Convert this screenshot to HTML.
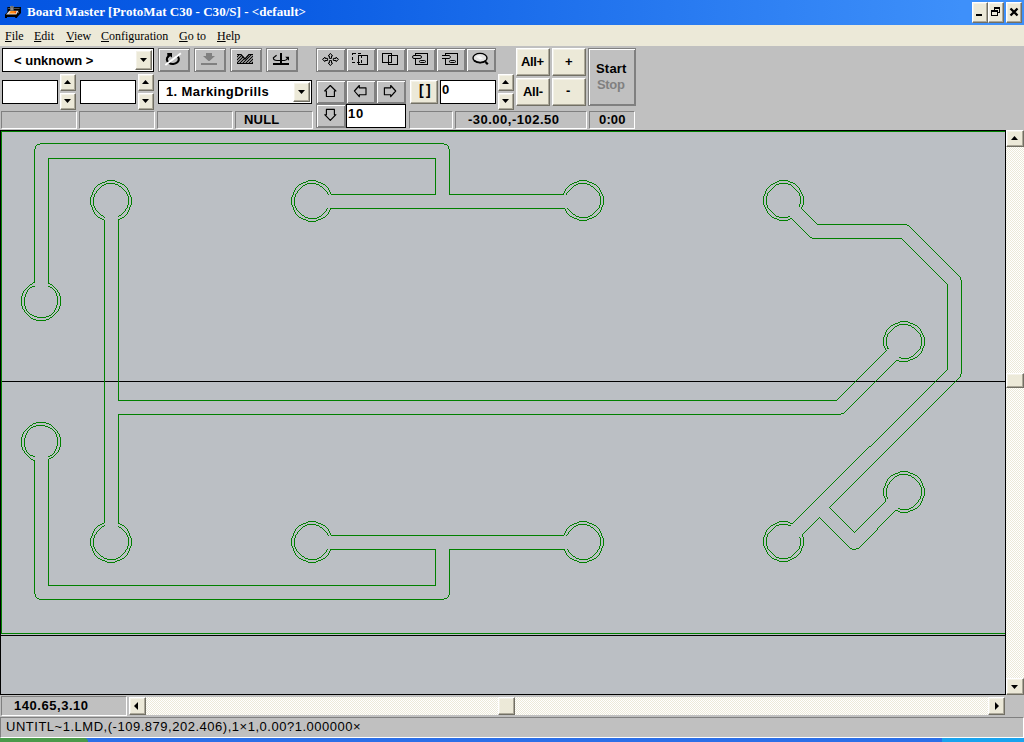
<!DOCTYPE html>
<html><head><meta charset="utf-8"><title>Board Master</title>
<style>
*{box-sizing:border-box;margin:0;padding:0}
html,body{width:1024px;height:742px;overflow:hidden;background:#c0c0c0;font-family:"Liberation Sans",sans-serif;font-size:13px;color:#000}
.a{position:absolute}
#title{left:0;top:0;width:1024px;height:25px;background:linear-gradient(90deg,#0455e2 0%,#0b5de4 30%,#3e90fa 94%,#3e90fa 100%)}
#tt{left:27px;top:4px;font-family:"Liberation Serif",serif;font-weight:bold;font-size:13px;color:#fff;white-space:nowrap;line-height:15px;letter-spacing:.03px}
#menu{left:0;top:25px;width:1024px;height:21px;background:#ece9d8}
#menu span{position:absolute;top:4px;font-family:"Liberation Serif",serif;font-size:12px;line-height:15px;white-space:nowrap}
#menu u{text-decoration:underline;text-underline-offset:1px}
.sunk{border:1px solid;border-color:#808080 #fff #fff #808080;background:#c0c0c0;height:18px;top:111px}
.t{position:absolute;font-weight:bold;font-size:13px;line-height:15px;white-space:nowrap}
.tb{border:1px solid #808080;background:#c0c0c0;box-shadow:inset 1px 1px 0 #fff,inset -1px -1px 0 #808080}
.xb{background:#ece9d8;border:1px solid;border-color:#fff #716f64 #716f64 #fff;box-shadow:inset -1px -1px 0 #aca899,inset 1px 1px 0 #f4f2e8}
.ed{background:#fff;border:1px solid #000}
.track{background:repeating-conic-gradient(#fff 0% 25%,#ece9d8 0% 50%) 0 0/2px 2px}
</style></head><body>

<!-- title bar -->
<div id="title" class="a"></div>
<div id="tt" class="a">Board Master [ProtoMat C30 - C30/S] - &lt;default&gt;</div>
<div class="a xb" style="left:972px;top:2px;width:16px;height:21px"></div>
<div class="a xb" style="left:988px;top:2px;width:16px;height:21px"></div>
<div class="a xb" style="left:1006px;top:2px;width:16px;height:21px"></div>

<!-- menu -->
<div id="menu" class="a">
 <span style="left:5px"><u>F</u>ile</span>
 <span style="left:34px"><u>E</u>dit</span>
 <span style="left:66px"><u>V</u>iew</span>
 <span style="left:101px"><u>C</u>onfiguration</span>
 <span style="left:179px"><u>G</u>o to</span>
 <span style="left:217px"><u>H</u>elp</span>
</div>

<!-- toolbar row 1 -->
<div class="a ed" style="left:2px;top:48px;width:152px;height:24px"></div>
<div class="a t" style="left:14px;top:53px">&lt; unknown &gt;</div>
<div class="a xb" style="left:135px;top:50px;width:17px;height:20px"></div>
<div class="a tb" style="left:158px;top:48px;width:32px;height:24px"></div>
<div class="a tb" style="left:194px;top:48px;width:32px;height:24px"></div>
<div class="a tb" style="left:230px;top:48px;width:32px;height:24px"></div>
<div class="a tb" style="left:266px;top:48px;width:32px;height:24px"></div>
<div class="a tb" style="left:316px;top:48px;width:30px;height:24px"></div>
<div class="a tb" style="left:346px;top:48px;width:30px;height:24px"></div>
<div class="a tb" style="left:376px;top:48px;width:30px;height:24px"></div>
<div class="a tb" style="left:406px;top:48px;width:30px;height:24px"></div>
<div class="a tb" style="left:436px;top:48px;width:30px;height:24px"></div>
<div class="a tb" style="left:466px;top:48px;width:30px;height:24px"></div>

<!-- row 2 -->
<div class="a ed" style="left:2px;top:80px;width:56px;height:24px"></div>
<div class="a xb" style="left:60px;top:74px;width:16px;height:17px"></div>
<div class="a xb" style="left:60px;top:93px;width:16px;height:17px"></div>
<div class="a ed" style="left:80px;top:80px;width:56px;height:24px"></div>
<div class="a xb" style="left:138px;top:74px;width:16px;height:17px"></div>
<div class="a xb" style="left:138px;top:93px;width:16px;height:17px"></div>
<div class="a ed" style="left:158px;top:80px;width:154px;height:24px"></div>
<div class="a t" style="left:166px;top:84px;letter-spacing:.39px">1. MarkingDrills</div>
<div class="a xb" style="left:293px;top:82px;width:17px;height:20px"></div>

<div class="a tb" style="left:316px;top:80px;width:30px;height:24px"></div>
<div class="a tb" style="left:346px;top:80px;width:30px;height:24px"></div>
<div class="a tb" style="left:376px;top:80px;width:30px;height:24px"></div>
<div class="a tb" style="left:316px;top:104px;width:30px;height:24px"></div>
<div class="a ed" style="left:346px;top:104px;width:60px;height:24px"></div>
<div class="a t" style="left:348px;top:106px;letter-spacing:.8px">10</div>

<div class="a xb" style="left:410px;top:80px;width:28px;height:24px"></div>
<div class="a t" style="left:419px;top:83px;letter-spacing:2.4px;font-size:14px">[]</div>
<div class="a ed" style="left:440px;top:80px;width:56px;height:24px"></div>
<div class="a t" style="left:442px;top:82px">0</div>
<div class="a xb" style="left:498px;top:74px;width:16px;height:17px"></div>
<div class="a xb" style="left:498px;top:93px;width:16px;height:17px"></div>

<div class="a xb" style="left:516px;top:48px;width:34px;height:28px"></div>
<div class="a t" style="left:521px;top:54px;letter-spacing:-.4px">All+</div>
<div class="a xb" style="left:552px;top:48px;width:34px;height:28px"></div>
<div class="a t" style="left:565px;top:54px">+</div>
<div class="a xb" style="left:516px;top:78px;width:34px;height:28px"></div>
<div class="a t" style="left:523px;top:84px;letter-spacing:-.3px">All-</div>
<div class="a xb" style="left:552px;top:78px;width:34px;height:28px"></div>
<div class="a t" style="left:566px;top:83px">-</div>

<div class="a tb" style="left:588px;top:48px;width:48px;height:58px"></div>
<div class="a t" style="left:596px;top:61px;letter-spacing:.2px">Start</div>
<div class="a t" style="left:597px;top:77px;color:#808080;letter-spacing:-.35px">Stop</div>

<!-- status row -->
<div class="a sunk" style="left:1px;width:76px"></div>
<div class="a sunk" style="left:79px;width:76px"></div>
<div class="a sunk" style="left:157px;width:76px"></div>
<div class="a sunk" style="left:235px;width:78px"></div>
<div class="a t" style="left:244px;top:112px;letter-spacing:.2px">NULL</div>
<div class="a sunk" style="left:409px;width:44px"></div>
<div class="a sunk" style="left:455px;width:132px"></div>
<div class="a t" style="left:468px;top:112px;letter-spacing:.49px">-30.00,-102.50</div>
<div class="a sunk" style="left:589px;width:46px"></div>
<div class="a t" style="left:599px;top:112px;letter-spacing:.15px">0:00</div>

<!-- canvas -->
<div class="a" style="left:0;top:130px;width:1006px;height:565px;background:#000"></div>
<div class="a" style="left:1px;top:131px;width:1004px;height:563px;background:#bbbfc4"></div>

<!-- vertical scrollbar -->
<div class="a track" style="left:1006px;top:130px;width:18px;height:565px"></div>
<div class="a xb" style="left:1006px;top:130px;width:18px;height:17px"></div>
<div class="a xb" style="left:1006px;top:678px;width:18px;height:17px"></div>
<div class="a xb" style="left:1006px;top:373px;width:18px;height:15px"></div>

<!-- bottom: coords + hscroll -->
<div class="a" style="left:0;top:695px;width:1024px;height:22px;background:#c0c0c0"></div>
<div class="a sunk" style="left:1px;top:696px;width:126px;height:20px"></div>
<div class="a t" style="left:14px;top:698px;letter-spacing:.54px">140.65,3.10</div>
<div class="a track" style="left:129px;top:697px;width:876px;height:18px"></div>
<div class="a xb" style="left:129px;top:697px;width:17px;height:18px"></div>
<div class="a xb" style="left:988px;top:697px;width:17px;height:18px"></div>
<div class="a xb" style="left:498px;top:697px;width:17px;height:18px"></div>

<!-- status bar -->
<div class="a" style="left:0;top:717px;width:1024px;height:21px;background:#c0c0c0;border:1px solid;border-color:#808080 #fff #fff #808080"></div>
<div class="a t" style="left:6px;top:719px;font-weight:normal;letter-spacing:.52px">UNTITL~1.LMD,(-109.879,202.406),1×1,0.00?1.000000×</div>
<!-- taskbar sliver -->
<div class="a" style="left:0;top:738px;width:1024px;height:4px;background:#2b6fe8"></div>
<div class="a" style="left:0;top:738px;width:88px;height:4px;background:#4a9a4a;border-radius:0 6px 0 0"></div>
<div class="a" style="left:942px;top:738px;width:82px;height:4px;background:#19a3ee"></div>

<!-- vector overlay: canvas drawing + icons, page coordinates -->
<svg class="a" style="left:0;top:0" width="1024" height="742" viewBox="0 0 1024 742">
 <g shape-rendering="crispEdges" fill="none" stroke-width="1">
  <path d="M1 131.5H1005M1.5 131V634M1 633.5H1005" stroke="#008000"/>
  <path d="M1 635.5H1005" stroke="#000"/>
  <path d="M2 381.5H1005" stroke="#000"/>
 </g>
 <path d="M40 143h404v1h-404zM37 144h3v1h-3zM444 144h3v1h-3zM48 158h388v1h-388zM107 180h8v1h-8zM308 180h8v1h-8zM579 180h8v1h-8zM779 180h9v1h-9zM105 181h2v1h-2zM115 181h2v1h-2zM306 181h2v1h-2zM316 181h2v1h-2zM577 181h2v1h-2zM587 181h2v1h-2zM777 181h2v1h-2zM788 181h2v1h-2zM102 182h3v1h-3zM117 182h3v1h-3zM303 182h3v1h-3zM318 182h3v1h-3zM574 182h3v1h-3zM589 182h3v1h-3zM775 182h2v1h-2zM790 182h3v1h-3zM100 183h2v1h-2zM106 183h9v1h-9zM120 183h2v1h-2zM301 183h2v1h-2zM307 183h9v1h-9zM321 183h2v1h-2zM572 183h2v1h-2zM578 183h9v1h-9zM592 183h2v1h-2zM773 183h2v1h-2zM779 183h9v1h-9zM793 183h2v1h-2zM98 184h2v1h-2zM104 184h2v1h-2zM115 184h3v1h-3zM122 184h2v1h-2zM299 184h2v1h-2zM305 184h2v1h-2zM316 184h3v1h-3zM323 184h2v1h-2zM570 184h2v1h-2zM576 184h2v1h-2zM587 184h3v1h-3zM594 184h2v1h-2zM771 184h2v1h-2zM776 184h3v1h-3zM788 184h3v1h-3zM102 185h2v1h-2zM303 185h2v1h-2zM574 185h2v1h-2zM119 186h2v1h-2zM320 186h2v1h-2zM591 186h2v1h-2zM331 194h105v1h-105zM449 194h115v1h-115zM330 208h235v1h-235zM573 214h2v1h-2zM101 215h2v1h-2zM119 215h2v1h-2zM302 215h2v1h-2zM590 215h2v1h-2zM319 216h2v1h-2zM570 216h2v1h-2zM576 216h3v1h-3zM588 216h2v1h-2zM594 216h2v1h-2zM776 216h3v1h-3zM788 216h2v1h-2zM98 217h2v1h-2zM122 217h2v1h-2zM299 217h2v1h-2zM305 217h3v1h-3zM317 217h2v1h-2zM323 217h2v1h-2zM572 217h2v1h-2zM579 217h9v1h-9zM592 217h2v1h-2zM772 217h2v1h-2zM779 217h9v1h-9zM100 218h2v1h-2zM120 218h2v1h-2zM301 218h2v1h-2zM308 218h9v1h-9zM321 218h2v1h-2zM574 218h3v1h-3zM589 218h3v1h-3zM774 218h3v1h-3zM790 218h2v1h-2zM102 219h2v1h-2zM118 219h2v1h-2zM303 219h3v1h-3zM318 219h3v1h-3zM577 219h2v1h-2zM587 219h2v1h-2zM777 219h2v1h-2zM788 219h2v1h-2zM306 220h2v1h-2zM316 220h2v1h-2zM579 220h8v1h-8zM779 220h9v1h-9zM308 221h8v1h-8zM817 224h90v1h-90zM907 225h2v1h-2zM810 237h2v1h-2zM812 238h90v1h-90zM33 282h2v1h-2zM48 283h2v1h-2zM30 284h2v1h-2zM50 284h2v1h-2zM32 286h3v1h-3zM48 286h2v1h-2zM30 287h2v1h-2zM50 287h2v1h-2zM30 314h2v1h-2zM32 315h2v1h-2zM49 315h2v1h-2zM34 316h3v1h-3zM46 316h3v1h-3zM37 317h9v1h-9zM50 317h2v1h-2zM31 318h2v1h-2zM33 319h3v1h-3zM46 319h3v1h-3zM36 320h10v1h-10zM900 321h8v1h-8zM898 322h2v1h-2zM908 322h2v1h-2zM895 323h3v1h-3zM910 323h3v1h-3zM893 324h2v1h-2zM899 324h9v1h-9zM913 324h2v1h-2zM891 325h2v1h-2zM897 325h2v1h-2zM908 325h3v1h-3zM915 325h2v1h-2zM895 326h2v1h-2zM912 327h2v1h-2zM887 348h2v1h-2zM911 356h2v1h-2zM899 357h2v1h-2zM909 357h2v1h-2zM915 357h2v1h-2zM901 358h8v1h-8zM913 358h2v1h-2zM910 359h3v1h-3zM896 360h3v1h-3zM908 360h2v1h-2zM899 361h9v1h-9zM118 400h719v1h-719zM841 413h3v1h-3zM118 414h723v1h-723zM36 422h10v1h-10zM33 423h3v1h-3zM46 423h3v1h-3zM49 424h2v1h-2zM30 425h2v1h-2zM36 425h9v1h-9zM33 426h3v1h-3zM45 426h3v1h-3zM31 427h2v1h-2zM48 427h2v1h-2zM50 428h2v1h-2zM869 446h2v1h-2zM30 455h3v1h-3zM50 455h2v1h-2zM33 456h2v1h-2zM48 456h2v1h-2zM51 457h2v1h-2zM49 458h2v1h-2zM31 459h2v1h-2zM33 460h2v1h-2zM900 471h8v1h-8zM898 472h2v1h-2zM908 472h2v1h-2zM895 473h3v1h-3zM910 473h3v1h-3zM893 474h2v1h-2zM899 474h9v1h-9zM913 474h2v1h-2zM891 475h2v1h-2zM897 475h2v1h-2zM908 475h3v1h-3zM915 475h2v1h-2zM895 476h2v1h-2zM912 477h2v1h-2zM911 507h2v1h-2zM898 508h2v1h-2zM909 508h2v1h-2zM915 508h2v1h-2zM900 509h9v1h-9zM913 509h2v1h-2zM895 510h3v1h-3zM910 510h3v1h-3zM898 511h2v1h-2zM908 511h2v1h-2zM900 512h8v1h-8zM308 521h8v1h-8zM579 521h8v1h-8zM779 521h9v1h-9zM306 522h2v1h-2zM316 522h2v1h-2zM577 522h2v1h-2zM587 522h2v1h-2zM777 522h2v1h-2zM788 522h2v1h-2zM102 523h2v1h-2zM118 523h2v1h-2zM303 523h3v1h-3zM318 523h3v1h-3zM574 523h3v1h-3zM589 523h3v1h-3zM775 523h2v1h-2zM790 523h3v1h-3zM100 524h2v1h-2zM120 524h2v1h-2zM301 524h2v1h-2zM307 524h9v1h-9zM321 524h2v1h-2zM572 524h2v1h-2zM578 524h9v1h-9zM592 524h2v1h-2zM773 524h2v1h-2zM779 524h9v1h-9zM98 525h2v1h-2zM122 525h2v1h-2zM299 525h2v1h-2zM305 525h2v1h-2zM316 525h3v1h-3zM323 525h2v1h-2zM570 525h2v1h-2zM576 525h2v1h-2zM587 525h3v1h-3zM594 525h2v1h-2zM771 525h2v1h-2zM776 525h3v1h-3zM788 525h3v1h-3zM102 526h2v1h-2zM303 526h2v1h-2zM574 526h2v1h-2zM119 527h2v1h-2zM320 527h2v1h-2zM591 527h2v1h-2zM331 535h233v1h-233zM850 548h2v1h-2zM856 548h3v1h-3zM330 549h106v1h-106zM449 549h116v1h-116zM852 549h4v1h-4zM101 556h2v1h-2zM302 556h2v1h-2zM573 556h2v1h-2zM118 557h2v1h-2zM319 557h2v1h-2zM590 557h2v1h-2zM776 557h3v1h-3zM788 557h3v1h-3zM794 557h2v1h-2zM98 558h2v1h-2zM104 558h3v1h-3zM116 558h2v1h-2zM122 558h2v1h-2zM299 558h2v1h-2zM305 558h3v1h-3zM317 558h2v1h-2zM323 558h2v1h-2zM570 558h2v1h-2zM576 558h3v1h-3zM588 558h2v1h-2zM594 558h2v1h-2zM772 558h2v1h-2zM779 558h9v1h-9zM792 558h2v1h-2zM100 559h2v1h-2zM107 559h9v1h-9zM120 559h2v1h-2zM301 559h2v1h-2zM308 559h9v1h-9zM321 559h2v1h-2zM572 559h2v1h-2zM579 559h9v1h-9zM592 559h2v1h-2zM774 559h3v1h-3zM790 559h2v1h-2zM102 560h3v1h-3zM117 560h3v1h-3zM303 560h3v1h-3zM318 560h3v1h-3zM574 560h3v1h-3zM589 560h3v1h-3zM777 560h2v1h-2zM788 560h2v1h-2zM105 561h2v1h-2zM115 561h2v1h-2zM306 561h2v1h-2zM316 561h2v1h-2zM577 561h2v1h-2zM587 561h2v1h-2zM779 561h9v1h-9zM107 562h8v1h-8zM308 562h8v1h-8zM579 562h8v1h-8zM48 585h388v1h-388zM37 598h2v1h-2zM444 598h3v1h-3zM39 599h405v1h-405zM21 296h1v10h-1zM21 437h1v10h-1zM22 293h1v3h-1zM22 306h1v3h-1zM22 434h1v3h-1zM22 447h1v3h-1zM23 291h1v2h-1zM23 309h1v1h-1zM23 432h1v2h-1zM23 450h1v1h-1zM24 290h1v1h-1zM24 297h1v9h-1zM24 310h1v2h-1zM24 431h1v1h-1zM24 438h1v9h-1zM24 451h1v2h-1zM25 289h1v1h-1zM25 294h1v3h-1zM25 306h1v3h-1zM25 312h1v1h-1zM25 430h1v1h-1zM25 435h1v3h-1zM25 447h1v3h-1zM25 453h1v1h-1zM26 288h1v1h-1zM26 292h1v2h-1zM26 309h1v2h-1zM26 313h1v1h-1zM26 429h1v1h-1zM26 433h1v2h-1zM26 450h1v2h-1zM26 454h1v1h-1zM27 287h1v1h-1zM27 290h1v2h-1zM27 311h1v1h-1zM27 314h1v1h-1zM27 428h1v1h-1zM27 431h1v2h-1zM27 452h1v1h-1zM27 455h1v1h-1zM28 286h1v1h-1zM28 289h1v1h-1zM28 312h1v1h-1zM28 315h1v1h-1zM28 427h1v1h-1zM28 430h1v1h-1zM28 453h1v1h-1zM28 456h1v1h-1zM29 285h1v1h-1zM29 288h1v1h-1zM29 313h1v1h-1zM29 316h1v1h-1zM29 426h1v1h-1zM29 429h1v1h-1zM29 454h1v1h-1zM29 457h1v1h-1zM30 317h1v1h-1zM30 428h1v1h-1zM30 458h1v1h-1zM32 283h1v1h-1zM32 424h1v1h-1zM34 149h1v133h-1zM34 461h1v133h-1zM35 146h1v3h-1zM35 594h1v3h-1zM36 145h1v1h-1zM36 597h1v1h-1zM48 159h1v124h-1zM48 459h1v126h-1zM49 318h1v1h-1zM51 314h1v1h-1zM51 425h1v1h-1zM52 285h1v1h-1zM52 288h1v1h-1zM52 313h1v1h-1zM52 316h1v1h-1zM52 426h1v1h-1zM52 429h1v1h-1zM52 454h1v1h-1zM53 286h1v1h-1zM53 289h1v1h-1zM53 312h1v1h-1zM53 315h1v1h-1zM53 427h1v1h-1zM53 430h1v1h-1zM53 453h1v1h-1zM53 456h1v1h-1zM54 287h1v1h-1zM54 290h1v1h-1zM54 310h1v2h-1zM54 314h1v1h-1zM54 428h1v1h-1zM54 431h1v1h-1zM54 451h1v2h-1zM54 455h1v1h-1zM55 288h1v1h-1zM55 291h1v2h-1zM55 308h1v2h-1zM55 313h1v1h-1zM55 429h1v1h-1zM55 432h1v2h-1zM55 449h1v2h-1zM55 454h1v1h-1zM56 289h1v1h-1zM56 293h1v3h-1zM56 305h1v3h-1zM56 312h1v1h-1zM56 430h1v1h-1zM56 434h1v3h-1zM56 446h1v3h-1zM56 453h1v1h-1zM57 290h1v2h-1zM57 296h1v9h-1zM57 311h1v1h-1zM57 431h1v2h-1zM57 437h1v9h-1zM57 452h1v1h-1zM58 292h1v1h-1zM58 309h1v2h-1zM58 433h1v1h-1zM58 450h1v2h-1zM59 293h1v3h-1zM59 306h1v3h-1zM59 434h1v3h-1zM59 447h1v3h-1zM60 296h1v10h-1zM60 437h1v10h-1zM90 197h1v8h-1zM90 538h1v8h-1zM91 195h1v2h-1zM91 205h1v2h-1zM91 536h1v2h-1zM91 546h1v2h-1zM92 192h1v3h-1zM92 207h1v3h-1zM92 533h1v3h-1zM92 548h1v3h-1zM93 190h1v2h-1zM93 197h1v9h-1zM93 210h1v2h-1zM93 531h1v2h-1zM93 538h1v9h-1zM93 551h1v2h-1zM94 188h1v2h-1zM94 194h1v3h-1zM94 206h1v2h-1zM94 212h1v2h-1zM94 529h1v2h-1zM94 535h1v3h-1zM94 547h1v2h-1zM94 553h1v2h-1zM95 187h1v1h-1zM95 193h1v1h-1zM95 208h1v2h-1zM95 214h1v1h-1zM95 528h1v1h-1zM95 534h1v1h-1zM95 549h1v2h-1zM95 555h1v1h-1zM96 186h1v1h-1zM96 191h1v2h-1zM96 210h1v1h-1zM96 215h1v1h-1zM96 527h1v1h-1zM96 532h1v2h-1zM96 551h1v1h-1zM96 556h1v1h-1zM97 185h1v1h-1zM97 190h1v1h-1zM97 211h1v1h-1zM97 216h1v1h-1zM97 526h1v1h-1zM97 531h1v1h-1zM97 552h1v1h-1zM97 557h1v1h-1zM98 189h1v1h-1zM98 212h1v1h-1zM98 530h1v1h-1zM98 553h1v1h-1zM99 188h1v1h-1zM99 213h1v1h-1zM99 529h1v1h-1zM99 554h1v1h-1zM100 187h1v1h-1zM100 214h1v1h-1zM100 528h1v1h-1zM100 555h1v1h-1zM101 186h1v1h-1zM101 527h1v1h-1zM103 216h1v1h-1zM103 557h1v1h-1zM104 217h1v1h-1zM104 220h1v303h-1zM104 525h1v1h-1zM118 185h1v1h-1zM118 216h1v1h-1zM118 220h1v180h-1zM118 415h1v108h-1zM118 526h1v1h-1zM120 556h1v1h-1zM121 187h1v1h-1zM121 214h1v1h-1zM121 528h1v1h-1zM121 555h1v1h-1zM122 188h1v1h-1zM122 213h1v1h-1zM122 529h1v1h-1zM122 554h1v1h-1zM123 189h1v1h-1zM123 212h1v1h-1zM123 530h1v1h-1zM123 553h1v1h-1zM124 185h1v1h-1zM124 190h1v1h-1zM124 211h1v1h-1zM124 216h1v1h-1zM124 526h1v1h-1zM124 531h1v1h-1zM124 552h1v1h-1zM124 557h1v1h-1zM125 186h1v1h-1zM125 191h1v1h-1zM125 209h1v2h-1zM125 215h1v1h-1zM125 527h1v1h-1zM125 532h1v1h-1zM125 550h1v2h-1zM125 556h1v1h-1zM126 187h1v1h-1zM126 192h1v2h-1zM126 208h1v1h-1zM126 214h1v1h-1zM126 528h1v1h-1zM126 533h1v2h-1zM126 549h1v1h-1zM126 555h1v1h-1zM127 188h1v2h-1zM127 194h1v2h-1zM127 205h1v3h-1zM127 212h1v2h-1zM127 529h1v2h-1zM127 535h1v2h-1zM127 546h1v3h-1zM127 553h1v2h-1zM128 190h1v2h-1zM128 196h1v9h-1zM128 210h1v2h-1zM128 531h1v2h-1zM128 537h1v9h-1zM128 551h1v2h-1zM129 192h1v3h-1zM129 207h1v3h-1zM129 533h1v3h-1zM129 548h1v3h-1zM130 195h1v2h-1zM130 205h1v2h-1zM130 536h1v2h-1zM130 546h1v2h-1zM131 197h1v8h-1zM131 538h1v8h-1zM291 197h1v8h-1zM291 538h1v8h-1zM292 195h1v2h-1zM292 205h1v2h-1zM292 536h1v2h-1zM292 546h1v2h-1zM293 192h1v3h-1zM293 207h1v3h-1zM293 533h1v3h-1zM293 548h1v3h-1zM294 190h1v2h-1zM294 197h1v9h-1zM294 210h1v2h-1zM294 531h1v2h-1zM294 538h1v9h-1zM294 551h1v2h-1zM295 188h1v2h-1zM295 194h1v3h-1zM295 206h1v2h-1zM295 212h1v2h-1zM295 529h1v2h-1zM295 535h1v3h-1zM295 547h1v2h-1zM295 553h1v2h-1zM296 187h1v1h-1zM296 193h1v1h-1zM296 208h1v2h-1zM296 214h1v1h-1zM296 528h1v1h-1zM296 534h1v1h-1zM296 549h1v2h-1zM296 555h1v1h-1zM297 186h1v1h-1zM297 191h1v2h-1zM297 210h1v1h-1zM297 215h1v1h-1zM297 527h1v1h-1zM297 532h1v2h-1zM297 551h1v1h-1zM297 556h1v1h-1zM298 185h1v1h-1zM298 190h1v1h-1zM298 211h1v1h-1zM298 216h1v1h-1zM298 526h1v1h-1zM298 531h1v1h-1zM298 552h1v1h-1zM298 557h1v1h-1zM299 189h1v1h-1zM299 212h1v1h-1zM299 530h1v1h-1zM299 553h1v1h-1zM300 188h1v1h-1zM300 213h1v1h-1zM300 529h1v1h-1zM300 554h1v1h-1zM301 187h1v1h-1zM301 214h1v1h-1zM301 528h1v1h-1zM301 555h1v1h-1zM302 186h1v1h-1zM302 527h1v1h-1zM304 216h1v1h-1zM304 557h1v1h-1zM319 185h1v1h-1zM319 526h1v1h-1zM321 215h1v1h-1zM321 556h1v1h-1zM322 187h1v1h-1zM322 214h1v1h-1zM322 528h1v1h-1zM322 555h1v1h-1zM323 188h1v1h-1zM323 213h1v1h-1zM323 529h1v1h-1zM323 554h1v1h-1zM324 189h1v1h-1zM324 212h1v1h-1zM324 530h1v1h-1zM324 553h1v1h-1zM325 185h1v1h-1zM325 190h1v1h-1zM325 211h1v1h-1zM325 216h1v1h-1zM325 526h1v1h-1zM325 531h1v1h-1zM325 552h1v1h-1zM325 557h1v1h-1zM326 186h1v1h-1zM326 191h1v1h-1zM326 209h1v2h-1zM326 215h1v1h-1zM326 527h1v1h-1zM326 532h1v1h-1zM326 550h1v2h-1zM326 556h1v1h-1zM327 187h1v1h-1zM327 192h1v2h-1zM327 208h1v1h-1zM327 214h1v1h-1zM327 528h1v1h-1zM327 533h1v2h-1zM327 549h1v1h-1zM327 555h1v1h-1zM328 188h1v2h-1zM328 194h1v1h-1zM328 212h1v2h-1zM328 529h1v2h-1zM328 535h1v1h-1zM328 553h1v2h-1zM329 190h1v2h-1zM329 210h1v2h-1zM329 531h1v2h-1zM329 551h1v2h-1zM330 192h1v2h-1zM330 209h1v1h-1zM330 533h1v2h-1zM330 550h1v1h-1zM435 159h1v35h-1zM435 550h1v35h-1zM447 145h1v1h-1zM447 597h1v1h-1zM448 146h1v3h-1zM448 595h1v2h-1zM449 149h1v45h-1zM449 550h1v45h-1zM563 193h1v1h-1zM564 191h1v2h-1zM564 533h1v2h-1zM564 550h1v1h-1zM565 189h1v2h-1zM565 209h1v2h-1zM565 531h1v2h-1zM565 551h1v2h-1zM566 188h1v1h-1zM566 193h1v2h-1zM566 211h1v2h-1zM566 529h1v2h-1zM566 535h1v1h-1zM566 553h1v2h-1zM567 187h1v1h-1zM567 192h1v1h-1zM567 208h1v1h-1zM567 213h1v1h-1zM567 528h1v1h-1zM567 534h1v1h-1zM567 549h1v1h-1zM567 555h1v1h-1zM568 186h1v1h-1zM568 191h1v1h-1zM568 209h1v1h-1zM568 214h1v1h-1zM568 527h1v1h-1zM568 532h1v2h-1zM568 550h1v2h-1zM568 556h1v1h-1zM569 185h1v1h-1zM569 190h1v1h-1zM569 210h1v1h-1zM569 215h1v1h-1zM569 526h1v1h-1zM569 531h1v1h-1zM569 552h1v1h-1zM569 557h1v1h-1zM570 189h1v1h-1zM570 211h1v1h-1zM570 530h1v1h-1zM570 553h1v1h-1zM571 188h1v1h-1zM571 212h1v1h-1zM571 529h1v1h-1zM571 554h1v1h-1zM572 187h1v1h-1zM572 213h1v1h-1zM572 528h1v1h-1zM572 555h1v1h-1zM573 186h1v1h-1zM573 527h1v1h-1zM575 215h1v1h-1zM575 557h1v1h-1zM590 185h1v1h-1zM590 526h1v1h-1zM592 214h1v1h-1zM592 556h1v1h-1zM593 187h1v1h-1zM593 213h1v1h-1zM593 528h1v1h-1zM593 555h1v1h-1zM594 188h1v1h-1zM594 212h1v1h-1zM594 529h1v1h-1zM594 554h1v1h-1zM595 189h1v1h-1zM595 211h1v1h-1zM595 530h1v1h-1zM595 553h1v1h-1zM596 185h1v1h-1zM596 190h1v1h-1zM596 210h1v1h-1zM596 215h1v1h-1zM596 526h1v1h-1zM596 531h1v1h-1zM596 552h1v1h-1zM596 557h1v1h-1zM597 186h1v1h-1zM597 191h1v1h-1zM597 209h1v1h-1zM597 214h1v1h-1zM597 527h1v1h-1zM597 532h1v1h-1zM597 550h1v2h-1zM597 556h1v1h-1zM598 187h1v1h-1zM598 192h1v1h-1zM598 208h1v1h-1zM598 213h1v1h-1zM598 528h1v1h-1zM598 533h1v2h-1zM598 549h1v1h-1zM598 555h1v1h-1zM599 188h1v2h-1zM599 193h1v3h-1zM599 205h1v3h-1zM599 212h1v1h-1zM599 529h1v2h-1zM599 535h1v2h-1zM599 546h1v3h-1zM599 553h1v2h-1zM600 190h1v2h-1zM600 196h1v9h-1zM600 210h1v2h-1zM600 531h1v2h-1zM600 537h1v9h-1zM600 551h1v2h-1zM601 192h1v2h-1zM601 207h1v3h-1zM601 533h1v3h-1zM601 548h1v3h-1zM602 194h1v2h-1zM602 205h1v2h-1zM602 536h1v2h-1zM602 546h1v2h-1zM603 196h1v9h-1zM603 538h1v8h-1zM763 196h1v9h-1zM763 537h1v9h-1zM764 194h1v2h-1zM764 205h1v2h-1zM764 535h1v2h-1zM764 546h1v2h-1zM765 191h1v3h-1zM765 207h1v2h-1zM765 532h1v3h-1zM765 548h1v2h-1zM766 189h1v2h-1zM766 196h1v9h-1zM766 209h1v2h-1zM766 530h1v2h-1zM766 537h1v9h-1zM766 550h1v2h-1zM767 188h1v1h-1zM767 193h1v3h-1zM767 205h1v3h-1zM767 211h1v2h-1zM767 529h1v1h-1zM767 534h1v3h-1zM767 546h1v3h-1zM767 552h1v2h-1zM768 187h1v1h-1zM768 192h1v1h-1zM768 208h1v1h-1zM768 213h1v1h-1zM768 528h1v1h-1zM768 533h1v1h-1zM768 549h1v1h-1zM768 554h1v1h-1zM769 186h1v1h-1zM769 191h1v1h-1zM769 209h1v1h-1zM769 214h1v1h-1zM769 527h1v1h-1zM769 532h1v1h-1zM769 550h1v1h-1zM769 555h1v1h-1zM770 185h1v1h-1zM770 190h1v1h-1zM770 210h1v1h-1zM770 215h1v1h-1zM770 526h1v1h-1zM770 531h1v1h-1zM770 551h1v1h-1zM770 556h1v1h-1zM771 189h1v1h-1zM771 211h1v1h-1zM771 216h1v1h-1zM771 530h1v1h-1zM771 552h1v1h-1zM771 557h1v1h-1zM772 188h1v1h-1zM772 212h1v1h-1zM772 529h1v1h-1zM772 553h1v1h-1zM773 187h1v1h-1zM773 213h1v1h-1zM773 528h1v1h-1zM773 554h1v1h-1zM774 186h1v1h-1zM774 214h1v1h-1zM774 527h1v1h-1zM774 555h1v1h-1zM775 185h1v1h-1zM775 215h1v1h-1zM775 526h1v1h-1zM775 556h1v1h-1zM791 185h1v1h-1zM791 556h1v1h-1zM792 186h1v1h-1zM792 219h1v1h-1zM792 555h1v1h-1zM793 187h1v1h-1zM793 220h1v1h-1zM793 522h1v1h-1zM793 554h1v1h-1zM794 188h1v1h-1zM794 221h1v1h-1zM794 521h1v1h-1zM794 553h1v1h-1zM795 184h1v1h-1zM795 189h1v1h-1zM795 222h1v1h-1zM795 520h1v1h-1zM795 552h1v1h-1zM796 185h1v1h-1zM796 190h1v1h-1zM796 223h1v1h-1zM796 519h1v1h-1zM796 551h1v1h-1zM796 556h1v1h-1zM797 186h1v1h-1zM797 191h1v1h-1zM797 224h1v1h-1zM797 518h1v1h-1zM797 550h1v1h-1zM797 555h1v1h-1zM798 187h1v1h-1zM798 192h1v1h-1zM798 225h1v1h-1zM798 517h1v1h-1zM798 549h1v1h-1zM798 554h1v1h-1zM799 188h1v2h-1zM799 193h1v3h-1zM799 204h1v3h-1zM799 226h1v1h-1zM799 516h1v1h-1zM799 537h1v1h-1zM799 546h1v3h-1zM799 553h1v1h-1zM800 190h1v2h-1zM800 196h1v8h-1zM800 227h1v1h-1zM800 515h1v1h-1zM800 538h1v8h-1zM800 551h1v2h-1zM801 192h1v2h-1zM801 207h1v2h-1zM801 228h1v1h-1zM801 514h1v1h-1zM801 548h1v3h-1zM802 194h1v2h-1zM802 205h1v2h-1zM802 209h1v1h-1zM802 229h1v1h-1zM802 513h1v1h-1zM802 534h1v3h-1zM802 546h1v2h-1zM803 196h1v9h-1zM803 210h1v1h-1zM803 230h1v1h-1zM803 512h1v1h-1zM803 533h1v1h-1zM803 537h1v9h-1zM804 211h1v1h-1zM804 231h1v1h-1zM804 511h1v1h-1zM804 532h1v1h-1zM805 212h1v1h-1zM805 232h1v1h-1zM805 510h1v1h-1zM805 531h1v1h-1zM806 213h1v1h-1zM806 233h1v1h-1zM806 509h1v1h-1zM806 530h1v1h-1zM807 214h1v1h-1zM807 234h1v1h-1zM807 508h1v1h-1zM807 529h1v1h-1zM808 215h1v1h-1zM808 235h1v1h-1zM808 507h1v1h-1zM808 528h1v1h-1zM809 216h1v1h-1zM809 236h1v1h-1zM809 506h1v1h-1zM809 527h1v1h-1zM810 217h1v1h-1zM810 505h1v1h-1zM810 526h1v1h-1zM811 218h1v1h-1zM811 504h1v1h-1zM811 525h1v1h-1zM812 219h1v1h-1zM812 503h1v1h-1zM812 524h1v1h-1zM813 220h1v1h-1zM813 502h1v1h-1zM813 523h1v1h-1zM814 221h1v1h-1zM814 501h1v1h-1zM814 522h1v1h-1zM815 222h1v1h-1zM815 500h1v1h-1zM815 521h1v1h-1zM816 223h1v1h-1zM816 499h1v1h-1zM816 520h1v1h-1zM817 498h1v1h-1zM817 519h1v1h-1zM818 497h1v1h-1zM818 518h1v1h-1zM819 496h1v1h-1zM819 517h1v1h-1zM820 495h1v1h-1zM820 518h1v1h-1zM821 494h1v1h-1zM821 519h1v1h-1zM822 493h1v1h-1zM822 520h1v1h-1zM823 492h1v1h-1zM823 521h1v1h-1zM824 491h1v1h-1zM824 522h1v1h-1zM825 490h1v1h-1zM825 523h1v1h-1zM826 489h1v1h-1zM826 524h1v1h-1zM827 488h1v1h-1zM827 525h1v1h-1zM828 487h1v1h-1zM828 526h1v1h-1zM829 486h1v1h-1zM829 507h1v1h-1zM829 527h1v1h-1zM830 485h1v1h-1zM830 506h1v1h-1zM830 508h1v1h-1zM830 528h1v1h-1zM831 484h1v1h-1zM831 505h1v1h-1zM831 509h1v1h-1zM831 529h1v1h-1zM832 483h1v1h-1zM832 504h1v1h-1zM832 510h1v1h-1zM832 530h1v1h-1zM833 482h1v1h-1zM833 503h1v1h-1zM833 511h1v1h-1zM833 531h1v1h-1zM834 481h1v1h-1zM834 502h1v1h-1zM834 512h1v1h-1zM834 532h1v1h-1zM835 480h1v1h-1zM835 501h1v1h-1zM835 513h1v1h-1zM835 533h1v1h-1zM836 479h1v1h-1zM836 500h1v1h-1zM836 514h1v1h-1zM836 534h1v1h-1zM837 399h1v1h-1zM837 478h1v1h-1zM837 499h1v1h-1zM837 515h1v1h-1zM837 535h1v1h-1zM838 398h1v1h-1zM838 477h1v1h-1zM838 498h1v1h-1zM838 516h1v1h-1zM838 536h1v1h-1zM839 397h1v1h-1zM839 476h1v1h-1zM839 497h1v1h-1zM839 517h1v1h-1zM839 537h1v1h-1zM840 396h1v1h-1zM840 475h1v1h-1zM840 496h1v1h-1zM840 518h1v1h-1zM840 538h1v1h-1zM841 395h1v1h-1zM841 474h1v1h-1zM841 495h1v1h-1zM841 519h1v1h-1zM841 539h1v1h-1zM842 394h1v1h-1zM842 473h1v1h-1zM842 494h1v1h-1zM842 520h1v1h-1zM842 540h1v1h-1zM843 393h1v1h-1zM843 472h1v1h-1zM843 493h1v1h-1zM843 521h1v1h-1zM843 541h1v1h-1zM844 392h1v1h-1zM844 412h1v1h-1zM844 471h1v1h-1zM844 492h1v1h-1zM844 522h1v1h-1zM844 542h1v1h-1zM845 391h1v1h-1zM845 411h1v1h-1zM845 470h1v1h-1zM845 491h1v1h-1zM845 523h1v1h-1zM845 543h1v1h-1zM846 390h1v1h-1zM846 410h1v1h-1zM846 469h1v1h-1zM846 490h1v1h-1zM846 524h1v1h-1zM846 544h1v1h-1zM847 389h1v1h-1zM847 409h1v1h-1zM847 468h1v1h-1zM847 489h1v1h-1zM847 525h1v1h-1zM847 545h1v1h-1zM848 388h1v1h-1zM848 408h1v1h-1zM848 467h1v1h-1zM848 488h1v1h-1zM848 526h1v1h-1zM848 546h1v1h-1zM849 387h1v1h-1zM849 407h1v1h-1zM849 466h1v1h-1zM849 487h1v1h-1zM849 527h1v1h-1zM849 547h1v1h-1zM850 386h1v1h-1zM850 406h1v1h-1zM850 465h1v1h-1zM850 486h1v1h-1zM850 528h1v1h-1zM851 385h1v1h-1zM851 405h1v1h-1zM851 464h1v1h-1zM851 485h1v1h-1zM851 529h1v1h-1zM852 384h1v1h-1zM852 404h1v1h-1zM852 463h1v1h-1zM852 484h1v1h-1zM852 530h1v1h-1zM853 383h1v1h-1zM853 403h1v1h-1zM853 462h1v1h-1zM853 483h1v1h-1zM853 531h1v1h-1zM854 382h1v1h-1zM854 402h1v1h-1zM854 461h1v1h-1zM854 482h1v1h-1zM854 532h1v1h-1zM855 381h1v1h-1zM855 401h1v1h-1zM855 460h1v1h-1zM855 481h1v1h-1zM855 531h1v1h-1zM856 380h1v1h-1zM856 400h1v1h-1zM856 459h1v1h-1zM856 480h1v1h-1zM856 530h1v1h-1zM857 379h1v1h-1zM857 399h1v1h-1zM857 458h1v1h-1zM857 479h1v1h-1zM857 529h1v1h-1zM858 378h1v1h-1zM858 398h1v1h-1zM858 457h1v1h-1zM858 478h1v1h-1zM858 528h1v1h-1zM859 377h1v1h-1zM859 397h1v1h-1zM859 456h1v1h-1zM859 477h1v1h-1zM859 527h1v1h-1zM859 547h1v1h-1zM860 376h1v1h-1zM860 396h1v1h-1zM860 455h1v1h-1zM860 476h1v1h-1zM860 526h1v1h-1zM860 546h1v1h-1zM861 375h1v1h-1zM861 395h1v1h-1zM861 454h1v1h-1zM861 475h1v1h-1zM861 525h1v1h-1zM861 545h1v1h-1zM862 374h1v1h-1zM862 394h1v1h-1zM862 453h1v1h-1zM862 474h1v1h-1zM862 524h1v1h-1zM862 544h1v1h-1zM863 373h1v1h-1zM863 393h1v1h-1zM863 452h1v1h-1zM863 473h1v1h-1zM863 523h1v1h-1zM863 543h1v1h-1zM864 372h1v1h-1zM864 392h1v1h-1zM864 451h1v1h-1zM864 472h1v1h-1zM864 522h1v1h-1zM864 542h1v1h-1zM865 371h1v1h-1zM865 391h1v1h-1zM865 450h1v1h-1zM865 471h1v1h-1zM865 521h1v1h-1zM865 541h1v1h-1zM866 370h1v1h-1zM866 390h1v1h-1zM866 449h1v1h-1zM866 470h1v1h-1zM866 520h1v1h-1zM866 540h1v1h-1zM867 369h1v1h-1zM867 389h1v1h-1zM867 448h1v1h-1zM867 469h1v1h-1zM867 519h1v1h-1zM867 539h1v1h-1zM868 368h1v1h-1zM868 388h1v1h-1zM868 447h1v1h-1zM868 468h1v1h-1zM868 518h1v1h-1zM868 538h1v1h-1zM869 367h1v1h-1zM869 387h1v1h-1zM869 467h1v1h-1zM869 517h1v1h-1zM869 537h1v1h-1zM870 366h1v1h-1zM870 386h1v1h-1zM870 466h1v1h-1zM870 516h1v1h-1zM870 536h1v1h-1zM871 365h1v1h-1zM871 385h1v1h-1zM871 445h1v1h-1zM871 465h1v1h-1zM871 515h1v1h-1zM871 535h1v1h-1zM872 364h1v1h-1zM872 384h1v1h-1zM872 444h1v1h-1zM872 464h1v1h-1zM872 514h1v1h-1zM872 534h1v1h-1zM873 363h1v1h-1zM873 383h1v1h-1zM873 443h1v1h-1zM873 463h1v1h-1zM873 513h1v1h-1zM873 533h1v1h-1zM874 362h1v1h-1zM874 382h1v1h-1zM874 442h1v1h-1zM874 462h1v1h-1zM874 512h1v1h-1zM874 532h1v1h-1zM875 361h1v1h-1zM875 381h1v1h-1zM875 441h1v1h-1zM875 461h1v1h-1zM875 511h1v1h-1zM875 531h1v1h-1zM876 360h1v1h-1zM876 380h1v1h-1zM876 440h1v1h-1zM876 460h1v1h-1zM876 510h1v1h-1zM876 530h1v1h-1zM877 359h1v1h-1zM877 379h1v1h-1zM877 439h1v1h-1zM877 459h1v1h-1zM877 509h1v1h-1zM877 528h1v2h-1zM878 358h1v1h-1zM878 378h1v1h-1zM878 438h1v1h-1zM878 458h1v1h-1zM878 508h1v1h-1zM878 527h1v1h-1zM879 357h1v1h-1zM879 377h1v1h-1zM879 437h1v1h-1zM879 457h1v1h-1zM879 507h1v1h-1zM879 526h1v1h-1zM880 356h1v1h-1zM880 376h1v1h-1zM880 436h1v1h-1zM880 456h1v1h-1zM880 506h1v1h-1zM880 525h1v1h-1zM881 355h1v1h-1zM881 375h1v1h-1zM881 435h1v1h-1zM881 455h1v1h-1zM881 505h1v1h-1zM881 524h1v1h-1zM882 354h1v1h-1zM882 374h1v1h-1zM882 434h1v1h-1zM882 454h1v1h-1zM882 504h1v1h-1zM882 523h1v1h-1zM883 337h1v9h-1zM883 353h1v1h-1zM883 373h1v1h-1zM883 433h1v1h-1zM883 453h1v1h-1zM883 488h1v8h-1zM883 503h1v1h-1zM883 522h1v1h-1zM884 335h1v2h-1zM884 346h1v2h-1zM884 352h1v1h-1zM884 372h1v1h-1zM884 432h1v1h-1zM884 452h1v1h-1zM884 486h1v2h-1zM884 496h1v2h-1zM884 502h1v1h-1zM884 521h1v1h-1zM885 332h1v3h-1zM885 348h1v2h-1zM885 351h1v1h-1zM885 371h1v1h-1zM885 431h1v1h-1zM885 451h1v1h-1zM885 483h1v3h-1zM885 498h1v4h-1zM885 520h1v1h-1zM886 330h1v2h-1zM886 337h1v9h-1zM886 350h1v1h-1zM886 370h1v1h-1zM886 430h1v1h-1zM886 450h1v1h-1zM886 481h1v2h-1zM886 488h1v9h-1zM886 519h1v1h-1zM887 329h1v1h-1zM887 334h1v3h-1zM887 346h1v2h-1zM887 369h1v1h-1zM887 429h1v1h-1zM887 449h1v1h-1zM887 479h1v2h-1zM887 485h1v3h-1zM887 497h1v2h-1zM887 518h1v1h-1zM888 328h1v1h-1zM888 333h1v1h-1zM888 368h1v1h-1zM888 428h1v1h-1zM888 448h1v1h-1zM888 478h1v1h-1zM888 484h1v1h-1zM888 517h1v1h-1zM889 327h1v1h-1zM889 332h1v1h-1zM889 367h1v1h-1zM889 427h1v1h-1zM889 447h1v1h-1zM889 477h1v1h-1zM889 482h1v2h-1zM889 516h1v1h-1zM890 326h1v1h-1zM890 331h1v1h-1zM890 366h1v1h-1zM890 426h1v1h-1zM890 446h1v1h-1zM890 476h1v1h-1zM890 481h1v1h-1zM890 515h1v1h-1zM891 330h1v1h-1zM891 365h1v1h-1zM891 425h1v1h-1zM891 445h1v1h-1zM891 480h1v1h-1zM891 514h1v1h-1zM892 329h1v1h-1zM892 364h1v1h-1zM892 424h1v1h-1zM892 444h1v1h-1zM892 479h1v1h-1zM892 513h1v1h-1zM893 328h1v1h-1zM893 363h1v1h-1zM893 423h1v1h-1zM893 443h1v1h-1zM893 478h1v1h-1zM893 512h1v1h-1zM894 327h1v1h-1zM894 362h1v1h-1zM894 422h1v1h-1zM894 442h1v1h-1zM894 477h1v1h-1zM894 511h1v1h-1zM895 361h1v1h-1zM895 421h1v1h-1zM895 441h1v1h-1zM896 420h1v1h-1zM896 440h1v1h-1zM897 419h1v1h-1zM897 439h1v1h-1zM898 418h1v1h-1zM898 438h1v1h-1zM899 417h1v1h-1zM899 437h1v1h-1zM900 416h1v1h-1zM900 436h1v1h-1zM901 415h1v1h-1zM901 435h1v1h-1zM902 239h1v1h-1zM902 414h1v1h-1zM902 434h1v1h-1zM903 240h1v1h-1zM903 413h1v1h-1zM903 433h1v1h-1zM904 241h1v1h-1zM904 412h1v1h-1zM904 432h1v1h-1zM905 242h1v1h-1zM905 411h1v1h-1zM905 431h1v1h-1zM906 243h1v1h-1zM906 410h1v1h-1zM906 430h1v1h-1zM907 244h1v1h-1zM907 409h1v1h-1zM907 429h1v1h-1zM908 245h1v1h-1zM908 408h1v1h-1zM908 428h1v1h-1zM909 226h1v1h-1zM909 246h1v1h-1zM909 407h1v1h-1zM909 427h1v1h-1zM910 227h1v1h-1zM910 247h1v1h-1zM910 406h1v1h-1zM910 426h1v1h-1zM911 228h1v1h-1zM911 248h1v1h-1zM911 326h1v1h-1zM911 405h1v1h-1zM911 425h1v1h-1zM911 476h1v1h-1zM912 229h1v1h-1zM912 249h1v1h-1zM912 404h1v1h-1zM912 424h1v1h-1zM913 230h1v1h-1zM913 250h1v1h-1zM913 355h1v1h-1zM913 403h1v1h-1zM913 423h1v1h-1zM913 506h1v1h-1zM914 231h1v1h-1zM914 251h1v1h-1zM914 328h1v1h-1zM914 354h1v1h-1zM914 402h1v1h-1zM914 422h1v1h-1zM914 478h1v1h-1zM914 505h1v1h-1zM915 232h1v1h-1zM915 252h1v1h-1zM915 329h1v1h-1zM915 353h1v1h-1zM915 401h1v1h-1zM915 421h1v1h-1zM915 479h1v1h-1zM915 504h1v1h-1zM916 233h1v1h-1zM916 253h1v1h-1zM916 330h1v1h-1zM916 352h1v1h-1zM916 400h1v1h-1zM916 420h1v1h-1zM916 480h1v1h-1zM916 503h1v1h-1zM917 234h1v1h-1zM917 254h1v1h-1zM917 326h1v1h-1zM917 331h1v1h-1zM917 351h1v1h-1zM917 356h1v1h-1zM917 399h1v1h-1zM917 419h1v1h-1zM917 476h1v1h-1zM917 481h1v1h-1zM917 502h1v1h-1zM917 507h1v1h-1zM918 235h1v1h-1zM918 255h1v1h-1zM918 327h1v1h-1zM918 332h1v1h-1zM918 350h1v1h-1zM918 355h1v1h-1zM918 398h1v1h-1zM918 418h1v1h-1zM918 477h1v1h-1zM918 482h1v1h-1zM918 500h1v2h-1zM918 506h1v1h-1zM919 236h1v1h-1zM919 256h1v1h-1zM919 328h1v1h-1zM919 333h1v1h-1zM919 349h1v1h-1zM919 354h1v1h-1zM919 397h1v1h-1zM919 417h1v1h-1zM919 478h1v1h-1zM919 483h1v2h-1zM919 499h1v1h-1zM919 505h1v1h-1zM920 237h1v1h-1zM920 257h1v1h-1zM920 329h1v2h-1zM920 334h1v3h-1zM920 346h1v3h-1zM920 353h1v1h-1zM920 396h1v1h-1zM920 416h1v1h-1zM920 479h1v2h-1zM920 485h1v2h-1zM920 496h1v3h-1zM920 503h1v2h-1zM921 238h1v1h-1zM921 258h1v1h-1zM921 331h1v2h-1zM921 337h1v9h-1zM921 351h1v2h-1zM921 395h1v1h-1zM921 415h1v1h-1zM921 481h1v2h-1zM921 487h1v9h-1zM921 501h1v2h-1zM922 239h1v1h-1zM922 259h1v1h-1zM922 333h1v2h-1zM922 348h1v3h-1zM922 394h1v1h-1zM922 414h1v1h-1zM922 483h1v3h-1zM922 498h1v3h-1zM923 240h1v1h-1zM923 260h1v1h-1zM923 335h1v2h-1zM923 346h1v2h-1zM923 393h1v1h-1zM923 413h1v1h-1zM923 486h1v2h-1zM923 496h1v2h-1zM924 241h1v1h-1zM924 261h1v1h-1zM924 337h1v9h-1zM924 392h1v1h-1zM924 412h1v1h-1zM924 488h1v8h-1zM925 242h1v1h-1zM925 262h1v1h-1zM925 391h1v1h-1zM925 411h1v1h-1zM926 243h1v1h-1zM926 263h1v1h-1zM926 390h1v1h-1zM926 410h1v1h-1zM927 244h1v1h-1zM927 264h1v1h-1zM927 389h1v1h-1zM927 409h1v1h-1zM928 245h1v1h-1zM928 265h1v1h-1zM928 388h1v1h-1zM928 408h1v1h-1zM929 246h1v1h-1zM929 266h1v1h-1zM929 387h1v1h-1zM929 407h1v1h-1zM930 247h1v1h-1zM930 267h1v1h-1zM930 386h1v1h-1zM930 406h1v1h-1zM931 248h1v1h-1zM931 268h1v1h-1zM931 385h1v1h-1zM931 405h1v1h-1zM932 249h1v1h-1zM932 269h1v1h-1zM932 384h1v1h-1zM932 404h1v1h-1zM933 250h1v1h-1zM933 270h1v1h-1zM933 383h1v1h-1zM933 403h1v1h-1zM934 251h1v1h-1zM934 271h1v1h-1zM934 382h1v1h-1zM934 402h1v1h-1zM935 252h1v1h-1zM935 272h1v1h-1zM935 381h1v1h-1zM935 401h1v1h-1zM936 253h1v1h-1zM936 273h1v1h-1zM936 380h1v1h-1zM936 400h1v1h-1zM937 254h1v1h-1zM937 274h1v1h-1zM937 379h1v1h-1zM937 399h1v1h-1zM938 255h1v1h-1zM938 275h1v1h-1zM938 378h1v1h-1zM938 398h1v1h-1zM939 256h1v1h-1zM939 276h1v1h-1zM939 377h1v1h-1zM939 397h1v1h-1zM940 257h1v1h-1zM940 277h1v1h-1zM940 376h1v1h-1zM940 396h1v1h-1zM941 258h1v1h-1zM941 278h1v1h-1zM941 375h1v1h-1zM941 395h1v1h-1zM942 259h1v1h-1zM942 279h1v1h-1zM942 374h1v1h-1zM942 394h1v1h-1zM943 260h1v1h-1zM943 280h1v1h-1zM943 373h1v1h-1zM943 393h1v1h-1zM944 261h1v1h-1zM944 281h1v1h-1zM944 372h1v1h-1zM944 392h1v1h-1zM945 262h1v1h-1zM945 282h1v1h-1zM945 371h1v1h-1zM945 391h1v1h-1zM946 263h1v1h-1zM946 283h1v1h-1zM946 370h1v1h-1zM946 390h1v1h-1zM947 264h1v1h-1zM947 284h1v86h-1zM947 389h1v1h-1zM948 265h1v1h-1zM948 388h1v1h-1zM949 266h1v1h-1zM949 387h1v1h-1zM950 267h1v1h-1zM950 386h1v1h-1zM951 268h1v1h-1zM951 385h1v1h-1zM952 269h1v1h-1zM952 384h1v1h-1zM953 270h1v1h-1zM953 383h1v1h-1zM954 271h1v1h-1zM954 382h1v1h-1zM955 272h1v1h-1zM955 381h1v1h-1zM956 273h1v1h-1zM956 380h1v1h-1zM957 274h1v1h-1zM957 379h1v1h-1zM958 275h1v1h-1zM958 378h1v1h-1zM959 276h1v1h-1zM959 377h1v1h-1zM960 277h1v3h-1zM960 374h1v3h-1zM961 280h1v94h-1z" fill="#008000" shape-rendering="crispEdges"/>
<g>
<path d="M7 7H21V13L17.2 17.2L16.8 18H15.2V17H7V18H5V14.4L7.4 12V7Z" fill="#000"/>
<path d="M9.4 10.8H18.6L16.4 14.6H6Z" fill="#d9d9dc"/>
<path d="M10.6 11.1H16.6L15.6 13.9H9Z" fill="#ff8a14"/>
<path d="M9.6 13H15.9L15.6 13.9H9Z" fill="#ffb86a"/>
<rect x="10.2" y="6" width="3.4" height="4.6" fill="#8c8c8c"/>
<rect x="11.2" y="5.8" width="1.6" height="2" fill="#6a6a6a"/>
<path d="M8 8.4H10.2M13.6 8.4H19.6" stroke="#6e6e6e" stroke-width=".8"/>
<rect x="14.8" y="11.8" width="1" height="1" fill="#f01010"/>
<rect x="18" y="12" width="1" height="1.2" fill="#555"/>
</g>
<g shape-rendering="crispEdges" fill="#000">
<rect x="976" y="14" width="6" height="2"/>
<rect x="994" y="7" width="6" height="2"/><rect x="999" y="7" width="1" height="6"/><rect x="994" y="7" width="1" height="3"/><rect x="998" y="12" width="2" height="1"/>
<rect x="991" y="10" width="7" height="2"/><rect x="991" y="10" width="1" height="6"/><rect x="997" y="10" width="1" height="6"/><rect x="991" y="15" width="7" height="1"/>
</g>
<path d="M1010.5 8.5L1017.5 15.5M1017.5 8.5L1010.5 15.5" stroke="#000" stroke-width="2.3" fill="none"/>
<path d="M140 58h7l-3.5 4z" fill="#000"/>
<path d="M298 90h7l-3.5 4z" fill="#000"/>
<path d="M64 84h7l-3.5 -4z" fill="#000"/>
<path d="M64 99h7l-3.5 4z" fill="#000"/>
<path d="M142 84h7l-3.5 -4z" fill="#000"/>
<path d="M142 99h7l-3.5 4z" fill="#000"/>
<path d="M502 84h7l-3.5 -4z" fill="#000"/>
<path d="M502 99h7l-3.5 4z" fill="#000"/>
<path d="M1011 140h7l-3.5 -4z" fill="#000"/>
<path d="M1011 685h7l-3.5 4z" fill="#000"/>
<path d="M138 702v8l-4 -4.0z" fill="#000"/>
<path d="M995 702v8l4 -4.0z" fill="#000"/>
<path d="M176.7 55.7A6 4.7 0 1 1 168.3 56.2" stroke="#000" stroke-width="2.1" fill="none"/>
<path d="M167.2 53H172V57.6L170.2 56.2L167.6 58.2Z" fill="#000"/>
<path d="M165.3 64.9L180.9 53.2" stroke="#fff" stroke-width="1.9" fill="none"/>
<path d="M206 53h6v3h3l-5.5 5h-1l-5.5-5h3z" fill="#808080"/><rect x="201" y="63" width="16" height="2" fill="#808080" shape-rendering="crispEdges"/>
<defs><pattern id="hh" width="3" height="3" patternUnits="userSpaceOnUse"><path d="M-1 1L1 -1M0 3L3 0M2 4L4 2" stroke="#000" stroke-width="1.1"/></pattern></defs>
<path d="M237 54H241L245 58.6L249 54H253V64H237Z" fill="url(#hh)"/>
<path d="M237 54.5H241L245 59L249 54.5H253M237 63.5H253" stroke="#000" stroke-width="1.2" fill="none"/>
<g shape-rendering="crispEdges" fill="#000"><rect x="273" y="63" width="16" height="2"/><rect x="280" y="53" width="2" height="10"/></g>
<path d="M276.6 55.3L273.4 57.8Q273.2 60.5 277 60.5H284.5Q286.5 60.3 287.5 58.5" stroke="#000" stroke-width="1.2" fill="none"/><path d="M285.2 56.8H289V60.8Z" fill="#000"/>
<g stroke="#000" stroke-width="1" fill="none" stroke-linejoin="round"><path d="M330.4 53.4L332.6 56H331.5V58.4H329.4V56H328.2Z"/><path d="M330.4 65.6L332.6 63H331.5V60.6H329.4V63H328.2Z"/><path d="M322.5 59.4L325 57.2V58.4H327.6V60.5H325V61.6Z"/><path d="M338.5 59.4L336 57.2V58.4H333.3V60.5H336V61.6Z"/></g>
<g shape-rendering="crispEdges" fill="none" stroke="#000" stroke-width="1"><path d="M352.5 53.5H361.5V62.5H352.5Z" stroke-dasharray="3 2" stroke-width="1.2"/><rect x="358.5" y="55.5" width="9" height="9"/><rect x="382.5" y="53.5" width="9" height="9"/><rect x="388.5" y="55.5" width="9" height="9"/><rect x="415.5" y="53.5" width="12" height="11"/><rect x="445.5" y="53.5" width="12" height="11"/></g>
<g fill="#c0c0c0" stroke="#000" stroke-width="1"><rect x="412.5" y="55.5" width="9" height="3" rx="1.5"/><rect x="419.5" y="60.5" width="6" height="2" rx="1"/><path d="M442 55.5H449.5Q451.5 57 449.5 58.5H442" /><rect x="449.5" y="60.5" width="6" height="2" rx="1"/></g>
<rect x="441.5" y="56" width="3.5" height="2" fill="#c0c0c0"/>
<ellipse cx="480" cy="58" rx="7" ry="4.6" fill="#e4e4e4" stroke="#000" stroke-width="1.4"/><path d="M474 60.5Q480 64.5 486 60.8" stroke="#000" stroke-width="1.6" fill="none"/><path d="M476 56.5L479 55.5L483 58.5L480 59.5Z" fill="#f8f8f8"/><path d="M485.5 62L487.8 64.3" stroke="#000" stroke-width="2.2"/>
<g stroke="#000" stroke-width="1.15" fill="none" stroke-linejoin="round"><path d="M330.3 85.5L335.9 91H334.4V96.5H326.4V91H324.7Z"/><path d="M330.3 120.4L335.9 114.7H334.4V109.4H326.4V114.7H324.7Z"/><path d="M354.4 91L359.3 85.5V87.8H366V94.7H359.3V96.7Z"/><path d="M395.7 91L390.7 85.5V87.8H384.4V94.7H390.7V96.7Z"/></g>
</svg>
</body></html>
